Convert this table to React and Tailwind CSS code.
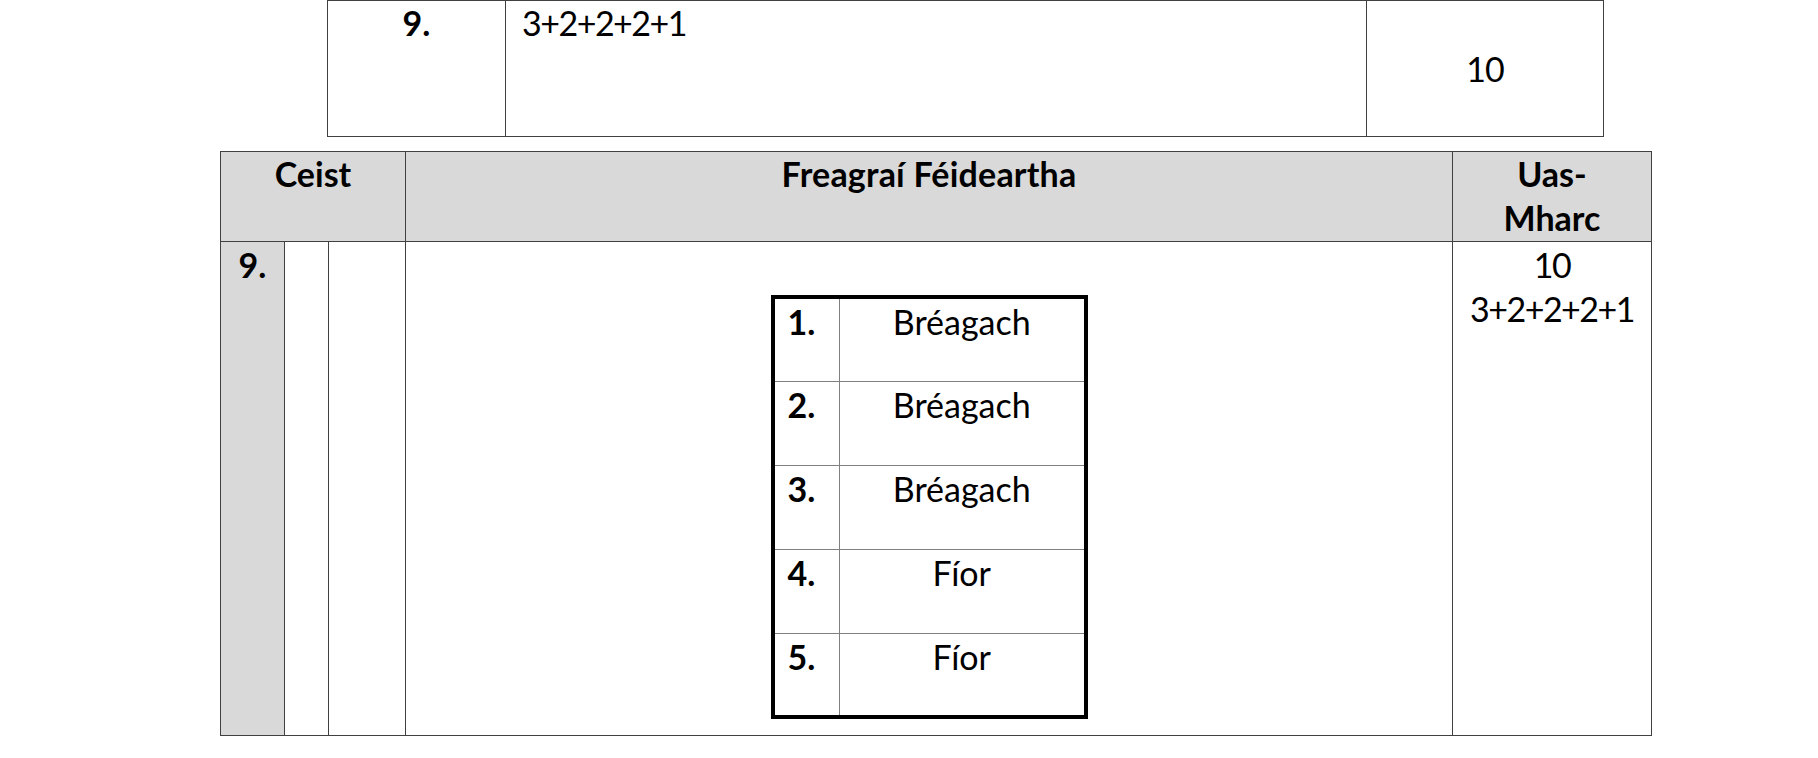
const answers = [
  { n: '1.', text: 'Bréagach' },
  { n: '2.', text: 'Bréagach' },
  { n: '3.', text: 'Bréagach' },
  { n: '4.', text: 'Fíor' },
  { n: '5.', text: 'Fíor' },
];

const cell = 'border border-[#404040] p-0';

export default function App() {
  return (
    <div className="min-h-screen bg-white text-black font-['Lato','Liberation_Sans',sans-serif] text-[34px] leading-[44px]">
      {/* marking scheme row carried over from previous page */}
      <table className="ml-[327px] w-[1277px] table-fixed border-collapse">
        <colgroup>
          <col className="w-[178px]" />
          <col className="w-[861px]" />
          <col className="w-[237px]" />
        </colgroup>
        <tbody>
          <tr className="h-[136px]">
            <td className={`${cell} align-top text-center font-bold`}>9.</td>
            <td className={`${cell} align-top pl-4 tracking-[-1.5px]`}>3+2+2+2+1</td>
            <td className={`${cell} align-middle text-center tracking-[-1px]`}>10</td>
          </tr>
        </tbody>
      </table>

      <table className="ml-[220px] mt-[14px] w-[1432px] table-fixed border-collapse">
        <colgroup>
          <col className="w-[64px]" />
          <col className="w-[44px]" />
          <col className="w-[77px]" />
          <col className="w-[1047px]" />
          <col className="w-[199px]" />
        </colgroup>
        <thead>
          <tr className="h-[90px] bg-[#d9d9d9]">
            <th colSpan={3} className={`${cell} align-top text-center font-bold`}>Ceist</th>
            <th className={`${cell} align-top text-center font-bold tracking-[0.2px]`}>Freagraí Féideartha</th>
            <th className={`${cell} align-top text-center font-bold`}>
              Uas-
              <br />
              Mharc
            </th>
          </tr>
        </thead>
        <tbody>
          <tr className="h-[494px]">
            <td className={`${cell} bg-[#d9d9d9] align-top text-center font-bold pt-[1px]`}>9.</td>
            <td className={cell}></td>
            <td className={cell}></td>
            <td className={`${cell} align-top`}>
              <div className="flex justify-center pt-[53px]">
                <table className="w-[313px] table-fixed border-collapse border-4 border-black">
                  <colgroup>
                    <col className="w-[67px]" />
                    <col className="w-[246px]" />
                  </colgroup>
                  <tbody>
                    {answers.map((a) => (
                      <tr key={a.n} className="h-[84px]">
                        <td className="border border-[#808080] border-l-4 border-l-black align-top font-bold pl-[13px] pt-[1px]">
                          {a.n}
                        </td>
                        <td className="border border-[#808080] border-r-4 border-r-black align-top text-center pt-[1px]">
                          {a.text}
                        </td>
                      </tr>
                    ))}
                  </tbody>
                </table>
              </div>
            </td>
            <td className={`${cell} align-top text-center pt-[1px] tracking-[-1.5px]`}>
              10
              <br />
              3+2+2+2+1
            </td>
          </tr>
        </tbody>
      </table>
    </div>
  );
}
